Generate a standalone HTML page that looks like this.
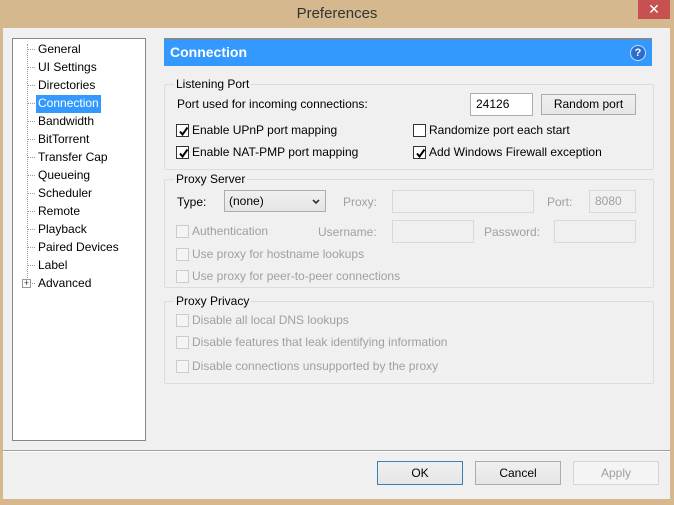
<!DOCTYPE html>
<html><head><style>
*{margin:0;padding:0;box-sizing:border-box}
body{width:674px;height:505px;background:#D5B88E;font-family:"Liberation Sans",sans-serif;font-size:12px;color:#000;position:relative;overflow:hidden}
.a{position:absolute;white-space:nowrap}
.t{line-height:14px}
.cb{position:absolute;width:13px;height:13px;border:1px solid #333;background:#fff}
.cb.d{border-color:#ccc;background:#f4f4f4}
.cb svg{position:absolute;left:1px;top:1px}
.g{color:#a0a0a0}
.grp{position:absolute;border:1px solid #dcdcdc;border-radius:2px}
.lg{position:absolute;background:#F0F0F0;padding:0 2px;line-height:14px}
.in{position:absolute;background:#fff;border:1px solid #abadb3}
.in.d{background:#f0f0f0;border-color:#d9d9d9}
.btn{position:absolute;border:1px solid #acacac;background:linear-gradient(#f0f0f0,#e5e5e5);text-align:center;line-height:22px}
.tree div{position:absolute;left:25px;line-height:16px}
.dot{position:absolute;left:14px;width:8px;border-top:1px dotted #999}
</style></head><body>
<div class="a" style="left:0;top:5px;width:674px;text-align:center;font-size:15px;color:#333">Preferences</div>
<div class="a" style="left:638px;top:0;width:32px;height:19px;background:#C75050;color:#fff;text-align:center;font-size:14px;line-height:18px">✕</div>
<div class="a" style="left:3px;top:28px;width:667px;height:471px;background:#F0F0F0"></div>
<div class="a tree" style="left:12px;top:38px;width:134px;height:403px;background:#fff;border:1px solid #828790">
<div style="position:absolute;left:14px;top:5px;height:240px;border-left:1px dotted #999"></div>
<span class="dot" style="top:10px"></span><div style="top:2px">General</div>
<span class="dot" style="top:28px"></span><div style="top:20px">UI Settings</div>
<span class="dot" style="top:46px"></span><div style="top:38px">Directories</div>
<span class="dot" style="top:64px"></span><div style="top:56px;left:23px;background:#3399FF;color:#fff;padding:0 2px;height:18px;line-height:17px">Connection</div>
<span class="dot" style="top:82px"></span><div style="top:74px">Bandwidth</div>
<span class="dot" style="top:100px"></span><div style="top:92px">BitTorrent</div>
<span class="dot" style="top:118px"></span><div style="top:110px">Transfer Cap</div>
<span class="dot" style="top:136px"></span><div style="top:128px">Queueing</div>
<span class="dot" style="top:154px"></span><div style="top:146px">Scheduler</div>
<span class="dot" style="top:172px"></span><div style="top:164px">Remote</div>
<span class="dot" style="top:190px"></span><div style="top:182px">Playback</div>
<span class="dot" style="top:208px"></span><div style="top:200px">Paired Devices</div>
<span class="dot" style="top:226px"></span><div style="top:218px">Label</div>
<span class="dot" style="top:244px"></span><div style="top:236px">Advanced</div>
<span style="position:absolute;left:9px;top:240px;width:9px;height:9px;border:1px solid #999;background:#fff;font-size:9px;line-height:7px;text-align:center;color:#333">+</span>
</div>
<div class="a" style="left:164px;top:38px;width:488px;height:28px;background:#3399FF;border-top:2px solid #7a8a9a;color:#fff;font-weight:bold;font-size:14px;line-height:25px;padding-left:6px">Connection</div>
<div class="a" style="left:630px;top:45px;width:16px;height:16px;border-radius:50%;background:#2a6fd0;border:1px solid #cde;color:#fff;font-size:11px;font-weight:bold;text-align:center;line-height:14px">?</div>

<div class="grp" style="left:164px;top:84px;width:490px;height:86px"></div>
<div class="lg" style="left:174px;top:77px">Listening Port</div>
<div class="a t" style="left:177px;top:97px">Port used for incoming connections:</div>
<div class="in" style="left:470px;top:93px;width:63px;height:23px;padding:3px 5px">24126</div>
<div class="btn" style="left:541px;top:94px;width:95px;height:21px;line-height:19px">Random port</div>
<div class="cb" style="left:176px;top:124px"><svg width="11" height="11"><path d="M2 5.5L4.5 8.5L9.5 1.5" stroke="#000" stroke-width="2" fill="none"/></svg></div>
<div class="a t" style="left:192px;top:123px">Enable UPnP port mapping</div>
<div class="cb" style="left:176px;top:146px"><svg width="11" height="11"><path d="M2 5.5L4.5 8.5L9.5 1.5" stroke="#000" stroke-width="2" fill="none"/></svg></div>
<div class="a t" style="left:192px;top:145px">Enable NAT-PMP port mapping</div>
<div class="cb" style="left:413px;top:124px"></div>
<div class="a t" style="left:429px;top:123px">Randomize port each start</div>
<div class="cb" style="left:413px;top:146px"><svg width="11" height="11"><path d="M2 5.5L4.5 8.5L9.5 1.5" stroke="#000" stroke-width="2" fill="none"/></svg></div>
<div class="a t" style="left:429px;top:145px">Add Windows Firewall exception</div>

<div class="grp" style="left:164px;top:179px;width:490px;height:109px"></div>
<div class="lg" style="left:174px;top:172px">Proxy Server</div>
<div class="a t" style="left:177px;top:195px">Type:</div>
<div class="a" style="left:224px;top:190px;width:102px;height:22px;border:1px solid #acacac;background:linear-gradient(#f0f0f0,#e5e5e5);padding:3px 4px;line-height:14px">(none)<svg style="position:absolute;right:5px;top:8px" width="8" height="6"><path d="M1 1L4 4L7 1" stroke="#333" stroke-width="1.6" fill="none"/></svg></div>
<div class="a t g" style="left:343px;top:195px">Proxy:</div>
<div class="in d" style="left:392px;top:190px;width:142px;height:23px"></div>
<div class="a t g" style="left:547px;top:195px">Port:</div>
<div class="in d g" style="left:589px;top:190px;width:47px;height:23px;padding:3px 5px">8080</div>
<div class="cb d" style="left:176px;top:225px"></div>
<div class="a t g" style="left:192px;top:224px">Authentication</div>
<div class="a t g" style="left:318px;top:225px">Username:</div>
<div class="in d" style="left:392px;top:220px;width:82px;height:23px"></div>
<div class="a t g" style="left:484px;top:225px">Password:</div>
<div class="in d" style="left:554px;top:220px;width:82px;height:23px"></div>
<div class="cb d" style="left:176px;top:248px"></div>
<div class="a t g" style="left:192px;top:247px">Use proxy for hostname lookups</div>
<div class="cb d" style="left:176px;top:270px"></div>
<div class="a t g" style="left:192px;top:269px">Use proxy for peer-to-peer connections</div>

<div class="grp" style="left:164px;top:301px;width:490px;height:83px"></div>
<div class="lg" style="left:174px;top:294px">Proxy Privacy</div>
<div class="cb d" style="left:176px;top:314px"></div>
<div class="a t g" style="left:192px;top:313px">Disable all local DNS lookups</div>
<div class="cb d" style="left:176px;top:336px"></div>
<div class="a t g" style="left:192px;top:335px">Disable features that leak identifying information</div>
<div class="cb d" style="left:176px;top:360px"></div>
<div class="a t g" style="left:192px;top:359px">Disable connections unsupported by the proxy</div>

<div class="a" style="left:3px;top:450px;width:667px;border-top:1px solid #a0a0a0;border-bottom:1px solid #fff"></div>
<div class="btn" style="left:377px;top:461px;width:86px;height:24px;border-color:#3c7fb1">OK</div>
<div class="btn" style="left:475px;top:461px;width:86px;height:24px">Cancel</div>
<div class="btn g" style="left:573px;top:461px;width:86px;height:24px;border-color:#d5d5d5;background:#f4f4f4">Apply</div>
</body></html>
